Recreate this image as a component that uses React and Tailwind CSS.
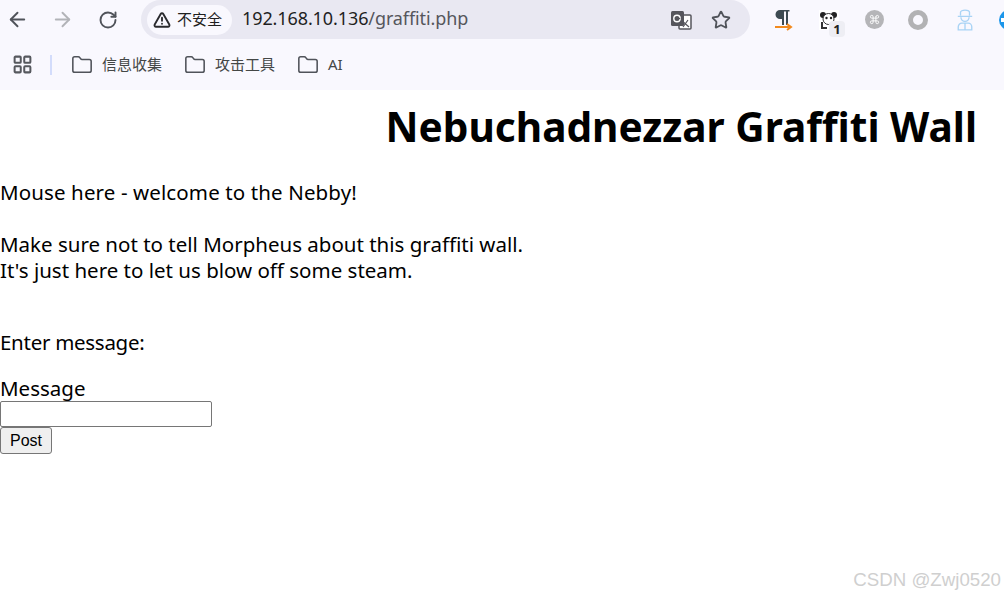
import { ArrowLeft, ArrowRight, RotateCw, TriangleAlert, Star, Folder, LayoutGrid, Command } from 'lucide-react'

const sans = 'font-["Noto_Sans","Noto_Sans_CJK_SC",sans-serif]'

function Bookmark({ label }) {
  return (
    <div className="flex items-center gap-[9px] text-[15px] text-[#444746]">
      <Folder size={22} strokeWidth={1.7} className="text-[#50535a]" />
      <span>{label}</span>
    </div>
  )
}

function TranslateIcon() {
  return (
    <svg width="22" height="22" viewBox="0 0 22 22">
      <rect x="9" y="6" width="12" height="14" rx="1" fill="#fff" stroke="#55555c" strokeWidth="1.5" />
      <rect x="1" y="2" width="13" height="15" rx="1.5" fill="#55555c" />
      <circle cx="7" cy="9.5" r="3.2" fill="none" stroke="#fff" strokeWidth="1.4" />
      <path d="M7 9.5h3.2M11 11l8 7M18 11l-5 7" stroke="#55555c" strokeWidth="1.2" fill="none" />
    </svg>
  )
}

function PilcrowIcon() {
  return (
    <svg width="18" height="22" viewBox="0 0 18 22">
      <path d="M7 1H5a4.500 4.500 0 0 0 0 9h2V16h2V2.500h2V16h2V2.500h1.500V1z" fill="#3d4a52" />
      <path d="M0 18h15M12 15l4 3-4 3" stroke="#f28a1e" strokeWidth="2" fill="none" />
    </svg>
  )
}

function PandaIcon() {
  return (
    <div className="relative w-5 h-5">
      <svg width="20" height="20" viewBox="0 0 20 20">
        <rect width="20" height="20" fill="#fff" />
        <circle cx="4" cy="5" r="3" fill="#222" />
        <circle cx="15" cy="5" r="3" fill="#222" />
        <circle cx="9.500" cy="9" r="5.500" fill="#fff" stroke="#333" />
        <circle cx="7.500" cy="8" r="1.200" fill="#222" />
        <circle cx="12" cy="8" r="1.200" fill="#222" />
        <path d="M3 12v6h5" stroke="#333" strokeWidth="2" fill="none" />
      </svg>
      <span className="absolute left-[10px] top-[11px] w-4 h-4 rounded-[4px] bg-[#eeeef4] text-[13px] leading-4 text-center font-bold text-[#222]">1</span>
    </div>
  )
}

function SpyIcon() {
  return (
    <svg width="18" height="22" viewBox="0 0 20 24" fill="none" stroke="#a9d3f5" strokeWidth="1.500">
      <path d="M5 7V3.500a5 2.500 0 0 1 10 0V7M2 8h16" />
      <path d="M5.500 9a4.500 4.500 0 0 0 9 0" />
      <path d="M2.500 23v-3.500a4 4 0 0 1 4-4h7a4 4 0 0 1 4 4V23zM10 15.500V23" />
    </svg>
  )
}

function Toolbar() {
  return (
    <div className={`bg-[#f9f8fe] ${sans} overflow-hidden`}>
      <div className="h-[39px] flex items-center pl-[6px]">
        <ArrowLeft size={23} strokeWidth={2} className="text-[#50535a] shrink-0" />
        <ArrowRight size={23} strokeWidth={2} className="text-[#b2b3b8] ml-[22px] shrink-0" />
        <RotateCw size={20} strokeWidth={2.3} className="text-[#50535a] ml-[24px] shrink-0" />
        <div className="ml-[23px] h-[39px] w-[609px] shrink-0 rounded-full bg-[#e9e8f2] flex items-center pl-[6px] pr-[19px]">
          <div className="h-[30px] w-[85px] rounded-full bg-[#f9f8fe] flex items-center pl-[6px] gap-[6px] text-[15px] text-[#1f1f1f]">
            <TriangleAlert size={18} strokeWidth={2.5} className="text-[#2a2a2e]" />
            <span>不安全</span>
          </div>
          <span className="ml-[10px] mt-[-2px] text-[18px] tracking-[-0.1px] text-[#1f1f1f]">
            192.168.10.136<span className="text-[#55565c]">/graffiti.php</span>
          </span>
          <div className="ml-auto flex items-center gap-[19px]">
            <TranslateIcon />
            <Star size={20} strokeWidth={2.2} className="text-[#50535a]" />
          </div>
        </div>
        <div className="ml-[25px] flex items-center">
          <PilcrowIcon />
          <div className="ml-[26px]"><PandaIcon /></div>
          <div className="ml-[26px] w-[19px] h-[19px] rounded-full bg-[#b5b5b8] flex items-center justify-center">
            <Command size={11} strokeWidth={2} className="text-white" />
          </div>
          <div className="ml-[24px] w-[20px] h-[20px] rounded-full border-[5px] border-[#b2b2b4]" />
          <div className="ml-[28px]"><SpyIcon /></div>
          <div className="ml-[25px] w-[20px] h-[20px] shrink-0 rounded-full bg-[#1c96ea] flex items-center">
            <div className="w-[13px] h-[4px] bg-white ml-[2px]" />
          </div>
        </div>
      </div>
      <div className="h-[51px] flex items-center pl-[12px]">
        <LayoutGrid size={21} strokeWidth={2.3} className="text-[#56585e]" />
        <div className="ml-[17px] w-[2px] h-[20px] bg-[#d3dcfb]" />
        <div className="ml-[19px] flex items-center gap-[22px]">
          <Bookmark label="信息收集" />
          <Bookmark label="攻击工具" />
          <Bookmark label="AI" />
        </div>
      </div>
    </div>
  )
}

export default function App() {
  return (
    <div className="relative h-[598px] overflow-hidden bg-white">
      <Toolbar />
      <div className={`${sans} text-[20.5px] leading-[26px] text-black`}>
        <h1 className="text-right text-[40.6px] leading-[56px] font-bold pr-[27px] pt-[9px]">Nebuchadnezzar Graffiti Wall</h1>
        <p className="mt-[24px] tracking-[0.12px]">Mouse here - welcome to the Nebby!</p>
        <p className="mt-[26px]">Make sure not to tell Morpheus about this graffiti wall.</p>
        <p>It's just here to let us blow off some steam.</p>
        <p className="mt-[46px] tracking-[-0.28px]">Enter message:</p>
        <label className="block mt-[20px] leading-[26px]">Message</label>
        <input className="block w-[212px] h-[26px] bg-white border border-[#767676] rounded-[2px]" />
        <button className='block h-[27px] w-[52px] bg-[#efefef] border border-[#767676] rounded-[3px] text-[16px] text-black font-["Liberation_Sans",sans-serif]'>Post</button>
      </div>
      <div className='absolute right-[3px] top-[568px] text-[18.7px] leading-6 text-[#cfcfcf] font-["Liberation_Sans",sans-serif]'>CSDN @Zwj0520</div>
    </div>
  )
}
